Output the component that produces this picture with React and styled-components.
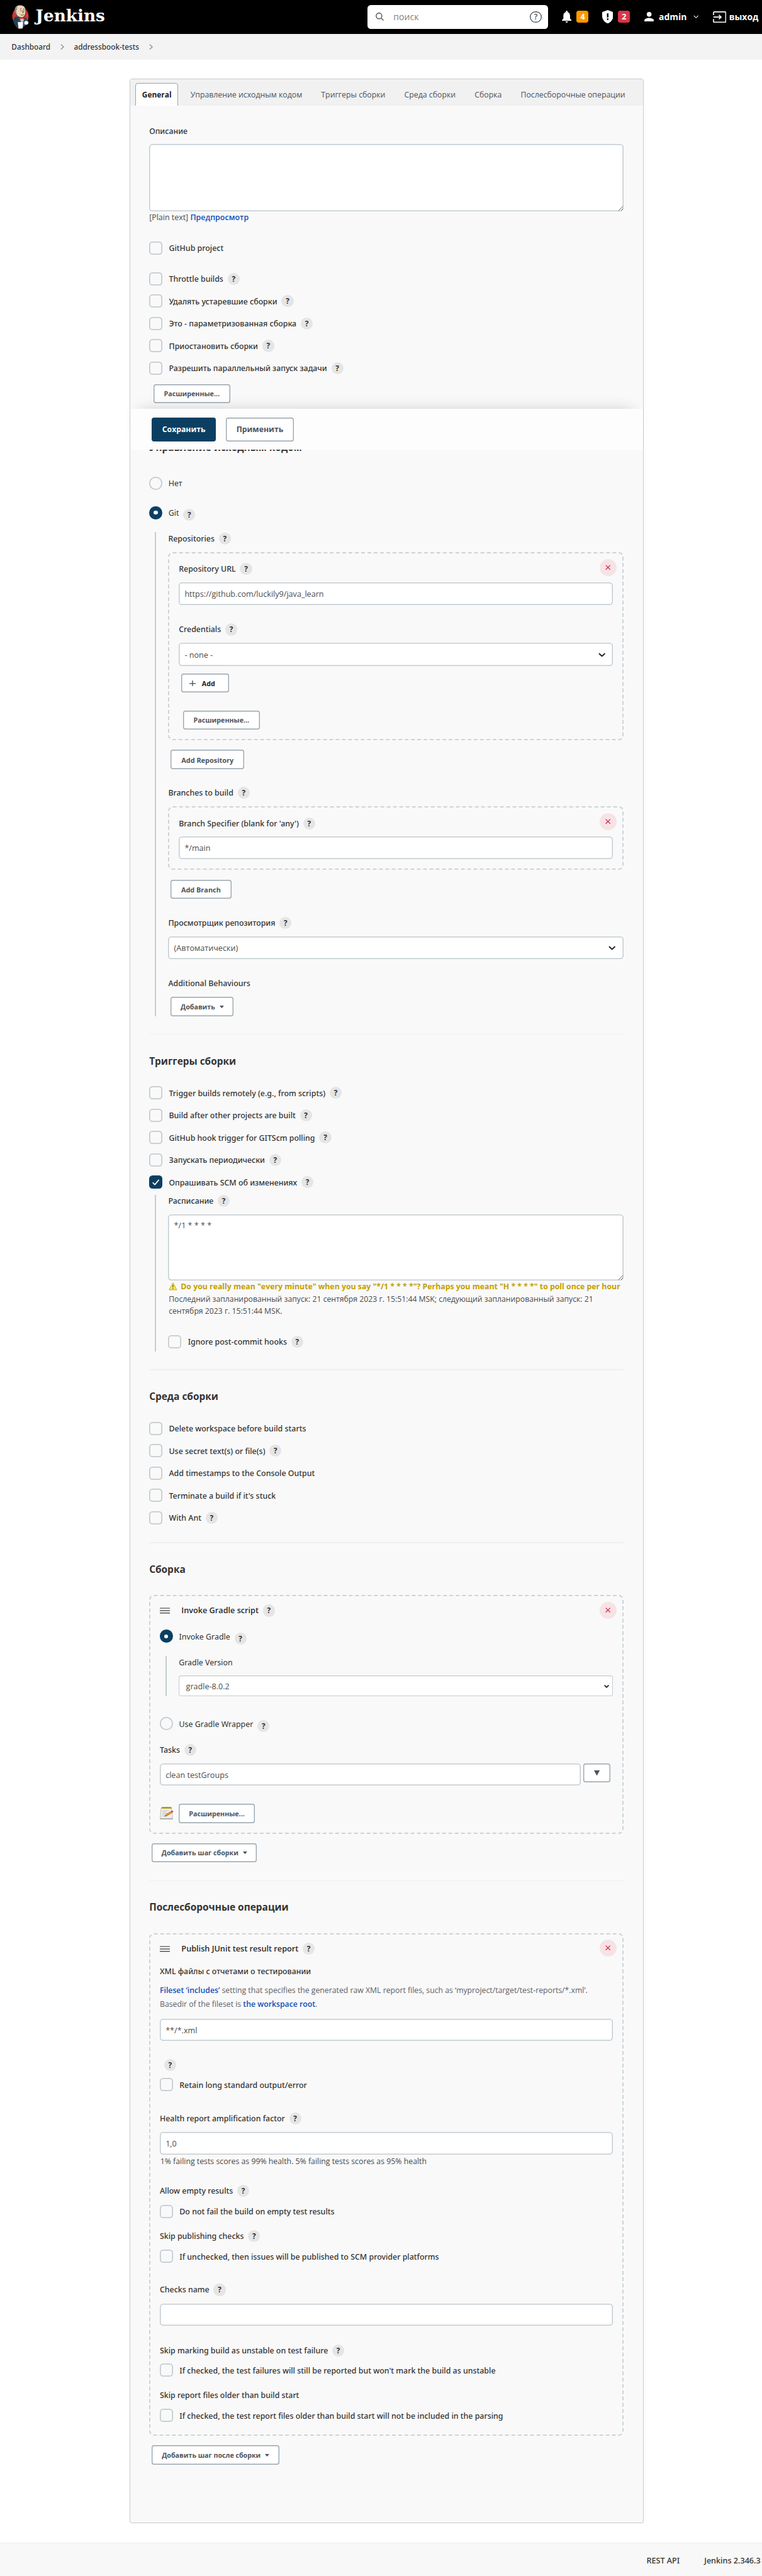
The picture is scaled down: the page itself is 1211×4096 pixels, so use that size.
import React from "react";
import styled, { createGlobalStyle, css } from "styled-components";

/* 1rem is ten design pixels at the page's scale */
const GlobalStyle = createGlobalStyle`
  html { font-size: 7.643px; }
  *, *::before, *::after { box-sizing: border-box; }
  body {
    margin: 0;
    background: #fff;
    color: #333;
    font-family: "Open Sans", "Noto Sans", sans-serif;
    font-size: 1.65rem;
    overflow-x: hidden;
  }
`;

const line = "#c3ccd1";
const buttonLine = "#98a5ae";
const navy = "#0b3f62";

/* ---------- header ---------- */

const Header = styled.header`
  display: flex;
  align-items: center;
  height: 7rem;
  background: #000;
  color: #fff;
  font-size: 1.83rem;
  font-weight: 700;
  white-space: nowrap;
`;

const Brand = styled.a`
  display: flex;
  align-items: center;
  flex: none;
  width: 76.4rem;
  padding-left: 2.3rem;
  gap: 1.4rem;
`;

const Wordmark = styled.span`
  font: 700 3.44rem/1 "DejaVu Serif", serif;
  padding-bottom: 0.5rem;
`;

const Search = styled.label`
  display: flex;
  align-items: center;
  flex: none;
  width: 37.5rem;
  height: 5rem;
  padding: 0 1.3rem 0 1.7rem;
  border-radius: 0.7rem;
  background: #fff;
`;

const SearchInput = styled.input`
  flex: 1;
  min-width: 0;
  border: 0;
  outline: 0;
  margin-left: 2rem;
  padding: 0;
  background: transparent;
  font: 400 1.85rem "Open Sans", sans-serif;
  &::placeholder { color: #828282; opacity: 1; }
`;

const HeaderItem = styled.a`
  display: flex;
  align-items: center;
  flex: none;
  gap: ${(p) => p.$gap || "1rem"};
  margin-left: ${(p) => p.$ml}rem;
  line-height: 2.5rem;
`;

const Count = styled.span`
  width: 2.5rem;
  height: 2.5rem;
  border-radius: 0.5rem;
  background: ${(p) => p.$color};
  font-size: 1.7rem;
  text-align: center;
`;

const Icon = styled.svg`
  display: block;
  flex: none;
  width: ${(p) => p.$w}rem;
  height: ${(p) => p.$h}rem;
  margin-left: ${(p) => p.$ml || 0}rem;
`;

/* ---------- breadcrumbs ---------- */

const Breadcrumbs = styled.nav`
  display: flex;
  align-items: center;
  height: 5.4rem;
  padding-left: 2.4rem;
  background: #f3f3f3;
  font: 500 1.54rem "Noto Sans", sans-serif;
`;

const Crumb = styled.a`
  display: flex;
  align-items: center;
  margin-right: 2rem;
`;

/* ---------- panel and tabs ---------- */

const Panel = styled.main`
  width: 106.9rem;
  margin: 4rem 0 0 26.9rem;
  border: 1px solid ${line};
  border-radius: 0.4rem;
  background: #f9f9f9;
`;

const Tabs = styled.nav`
  display: flex;
  align-items: flex-end;
  gap: 1.2rem;
  height: 5.4rem;
  padding-left: 1.15rem;
  background: #f1f1f1;
  white-space: nowrap;
`;

const Tab = styled.a`
  height: 4.6rem;
  padding: 0 1.24rem;
  border: 1px solid transparent;
  border-bottom: 0;
  border-radius: 0.6rem 0.6rem 0 0;
  color: #4d545d;
  font-size: 1.61rem;
  line-height: 4.7rem;
  ${(p) => p.$active && css`
    border-color: ${buttonLine};
    background: #fff;
    color: #222;
    font-size: 1.56rem;
    font-weight: 700;
  `}
`;

const Form = styled.form`
  display: flex;
  flex-direction: column;
  align-items: stretch;
  padding: 0 4rem 12.1rem;
`;

/* ---------- form parts ---------- */

const gapTop = css`margin-top: ${(p) => p.$mt || 0}rem;`;

const Title = styled.h2`
  ${gapTop}
  margin-bottom: 0;
  height: 3rem;
  padding-top: 0.1rem;
  font: 700 2.02rem/3rem "Open Sans", sans-serif;
  color: #333;
  white-space: nowrap;
`;

const LabelRow = styled.div`
  ${gapTop}
  display: flex;
  align-items: center;
  gap: 0.9rem;
  height: 2.5rem;
  padding-left: ${(p) => p.$indent || 0}rem;
  font: ${(p) => (p.$plain ? 400 : 500)} 1.62rem/2.5rem "Noto Sans", sans-serif;
  white-space: nowrap;
`;

const BlockName = styled.strong`
  font: 600 1.66rem/2.5rem "Open Sans", sans-serif;
  margin-left: 1.5rem;
  color: #2b2b2b;
`;

const HelpDot = styled.a`
  display: block;
  flex: none;
  width: 2.5rem;
  height: 2.5rem;
  border-radius: 50%;
  background: #e5e5e5;
  color: #333;
  font: 700 1.55rem/2.45rem "Open Sans", sans-serif;
  text-align: center;
  margin-top: ${(p) => p.$drop || 0}rem;
`;

const ChoiceRow = styled.label`
  ${gapTop}
  display: flex;
  align-items: center;
  gap: 0.9rem;
  height: 2.8rem;
  font: 500 1.625rem/2.6rem "Noto Sans", sans-serif;
  white-space: nowrap;
`;

const ChoiceText = styled.span`
  padding-top: 0.2rem;
  margin-left: ${(p) => (p.$radio ? 0.4 : 0.5)}rem;
  font-weight: ${(p) => (p.$light ? 400 : 500)};
`;

const Box = styled.span`
  display: flex;
  align-items: center;
  justify-content: center;
  flex: none;
  width: 2.7rem;
  height: 2.75rem;
  border-radius: ${(p) => (p.$round ? "50%" : "0.7rem")};
  box-shadow: inset 0 0 0 ${(p) => (p.$on ? 0 : 0.23)}rem ${line};
  background: ${(p) => (p.$on ? navy : "transparent")};
`;

const RadioDot = styled.span`
  width: 0.8rem;
  height: 0.8rem;
  border-radius: 50%;
  background: #fff;
`;

const field = css`
  ${gapTop}
  border: 0;
  outline: 0;
  border-radius: 0.7rem;
  box-shadow: inset 0 0 0 0.2rem ${line};
  background: #fff;
  color: #4d4d4d;
  font: 400 1.65rem "Open Sans", sans-serif;
`;

const TextInput = styled.input`
  ${field}
  width: 100%;
  min-width: 0;
  height: 4.65rem;
  padding: 0.2rem 1.2rem 0;
`;

const TextArea = styled.textarea`
  ${field}
  display: block;
  width: 100%;
  height: ${(p) => p.$h}rem;
  padding: 1.15rem 1.2rem;
  resize: vertical;
`;

const SelectBox = styled.div`
  ${field}
  display: flex;
  align-items: center;
  justify-content: space-between;
  height: ${(p) => (p.$thin ? 4.2 : 4.75)}rem;
  padding: 0.2rem ${(p) => (p.$thin ? 0.7 : 1.6)}rem 0 ${(p) => (p.$thin ? 1.35 : 1.2)}rem;
  ${(p) => p.$thin && css`
    border: 1px solid ${line};
    border-radius: 0.4rem;
    box-shadow: inset 0 1px 2px rgba(0, 0, 0, 0.07);
  `}
`;

const Button = styled.button`
  ${gapTop}
  display: flex;
  align-items: center;
  justify-content: center;
  align-self: flex-start;
  flex: none;
  gap: 0.9rem;
  width: ${(p) => p.$w}rem;
  height: 4rem;
  margin-left: ${(p) => p.$ml ?? 0.5}rem;
  margin-right: ${(p) => p.$mr || 0}rem;
  padding: 0.1rem 0 0;
  border: 0;
  border-radius: 0.5rem;
  box-shadow: inset 0 0 0 0.18rem ${buttonLine};
  background: #fff;
  color: #4d545d;
  font: 700 ${(p) => p.$size || 1.4}rem "Open Sans", sans-serif;
  white-space: nowrap;
`;

const AddCredential = styled(Button)`
  justify-content: flex-start;
  padding-left: 1.7rem;
  gap: 1.3rem;
  color: #222;
`;

const Nested = styled.div`
  ${gapTop}
  display: flex;
  flex-direction: column;
  margin-left: ${(p) => p.$ml || 1.2}rem;
  padding: 0 0 ${(p) => p.$pb || 0}rem 2.5rem;
  border-left: 2px solid ${line};
`;

const Chunk = styled.section`
  ${gapTop}
  position: relative;
  display: flex;
  flex-direction: column;
  padding: ${(p) => p.$pt}rem 1.94rem ${(p) => p.$pb}rem;
  border: 2px dashed #ccd4d8;
  border-radius: 1rem;
`;

const DeleteButton = styled.button`
  position: absolute;
  top: ${(p) => p.$top}rem;
  right: 1.2rem;
  display: flex;
  align-items: center;
  justify-content: center;
  width: 3.5rem;
  height: 3.5rem;
  padding: 0;
  border: 0;
  border-radius: 50%;
  background: #f6e3e6;
`;

const Divider = styled.hr`
  ${gapTop}
  width: 100%;
  height: 0.2rem;
  margin-bottom: 0;
  border: 0;
  background: #f0f0f0;
`;

const Line = styled.p`
  ${gapTop}
  margin-bottom: 0;
  padding-left: ${(p) => p.$indent || 0}rem;
  color: ${(p) => p.$color || "#4a4a4a"};
  font-size: ${(p) => p.$size || 1.6}rem;
  line-height: ${(p) => p.$lh || 2.6}rem;
  white-space: nowrap;
`;

const Link = styled.a`
  color: #134fb8;
  font-weight: 600;
`;

const Warning = styled.p`
  display: flex;
  align-items: center;
  gap: 0.7rem;
  height: 2.5rem;
  margin: 0;
  padding-left: 0.1rem;
  color: #c4a000;
  font-size: 1.61rem;
  font-weight: 700;
  white-space: nowrap;
`;

const InlineRow = styled.div`
  ${gapTop}
  display: flex;
  align-items: ${(p) => p.$align || "flex-start"};
`;

const SaveBar = styled.div`
  position: relative;
  z-index: 1;
  display: flex;
  align-items: flex-start;
  height: 8.5rem;
  margin: 1.2rem -4rem 0;
  padding: 1.8rem 4.5rem 0;
  background: #fdfdfd;
  box-shadow: 0 -1.6rem 3.2rem -2rem rgba(0, 0, 0, 0.2);
`;

const SaveButton = styled.button`
  height: 4.95rem;
  width: ${(p) => p.$w}rem;
  margin: 0 2rem 0 0;
  padding: 0 0 0.1rem;
  border: 0;
  border-radius: 0.5rem;
  color: ${(p) => (p.$primary ? "#fff" : "#4d545d")};
  background: ${(p) => (p.$primary ? navy : "#fff")};
  box-shadow: ${(p) => (p.$primary ? "none" : `inset 0 0 0 0.18rem ${buttonLine}`)};
  font: 700 1.605rem "Open Sans", sans-serif;
`;

const Footer = styled.footer`
  display: flex;
  justify-content: flex-end;
  gap: 5.1rem;
  height: 7.1rem;
  margin-top: 4rem;
  padding: 2.4rem 0.3rem 0 0;
  border-top: 1px solid #ededed;
  background: #f8f8f8;
  font: 500 1.65rem/2.5rem "Noto Sans", sans-serif;
`;

/* ---------- drawings ---------- */

const Chevron = ({ w = 1.5, h = 0.85, color = "#222", sw = 2.6, ml }) => (
  <Icon $w={w} $h={h} $ml={ml} viewBox="0 0 15 8.5" fill="none" stroke={color} strokeWidth={sw}>
    <path d="M1.2 1.2 7.5 7.2 13.8 1.2" />
  </Icon>
);

const CrumbArrow = () => (
  <Icon $w={0.8} $h={1.2} $ml={2.1} viewBox="0 0 8 12" fill="none" stroke="#8a8a8a" strokeWidth="1.7">
    <path d="M1 .8 6.6 6 1 11.2" />
  </Icon>
);

const Caret = ({ big }) => (
  <Icon $w={big ? 1.2 : 0.9} $h={big ? 1.1 : 0.55} viewBox="0 0 10 10" preserveAspectRatio="none" fill="#4d545d">
    <path d="M0 0h10L5 10z" />
  </Icon>
);

const Tick = () => (
  <Icon $w={1.5} $h={1.3} viewBox="0 0 15 13" fill="none" stroke="#fff" strokeWidth="2.2" strokeLinecap="round" strokeLinejoin="round">
    <path d="M1.5 7.5 5.3 11.3 13.3 1.8" />
  </Icon>
);

const Cross = () => (
  <Icon $w={1.1} $h={1.1} viewBox="0 0 11 11" fill="none" stroke="#e0203c" strokeWidth="1.6">
    <path d="M.8.8l9.4 9.4M10.2.8.8 10.2" />
  </Icon>
);

const Plus = () => (
  <Icon $w={1.3} $h={1.3} viewBox="0 0 13 13" fill="none" stroke="#444" strokeWidth="1.6">
    <path d="M6.5 0v13M0 6.5h13" />
  </Icon>
);

const Grip = () => (
  <Icon $w={2.1} $h={1.3} viewBox="0 0 21 13" fill="none" stroke="#555" strokeWidth="1.9">
    <path d="M0 1.5h21M0 6.5h21M0 11.5h21" />
  </Icon>
);

const WarningSign = () => (
  <Icon $w={1.8} $h={1.7} viewBox="0 0 18 17">
    <path d="M9 1 17 15.6H1z" fill="#fce94f" stroke="#c4a000" strokeWidth="1.2" strokeLinejoin="round" />
    <path d="M8.1 5.5h1.8l-.4 5h-1zM8.2 11.7h1.6v1.7H8.2z" fill="#333" />
  </Icon>
);

const Notepad = () => (
  <Icon $w={2.9} $h={2.9} viewBox="0 0 29 29">
    <path d="M2.5 4h22l2 22H.8z" fill="#efefec" stroke="#a5a5a0" strokeWidth=".9" />
    <path d="M.9 25h26l.3 2.500H.6z" fill="#b0b0aa" />
    <path d="M3.500 1.500h21v3.500H3.500z" fill="#d2b52c" />
    <path d="M4.500 1.500l2 3 2-3 2 3 2-3 2 3 2-3 2 3 2-3 2 3 1-2" fill="none" stroke="#6f5a05" strokeWidth=".8" />
    <path d="M5.500 9h13M5 12h9M5 15h12M4.500 18h6M4.500 21h6" stroke="#b9b9b4" strokeWidth="1" />
    <path d="M10.500 20.800l1.500-3L24.600 9.800l2 2.900L14 20.500z" fill="#eb9d3a" stroke="#7d4d0c" strokeWidth=".8" />
    <path d="M23.400 10.500l2.200-1.400c1.500-.4 2.900 1.500 2.200 2.700l-2.300 1.600z" fill="#dc4a3a" />
    <path d="M10.500 20.800l.8-1.600 1.100 1.400z" fill="#222" />
  </Icon>
);

const Butler = () => (
  <Icon $w={3.7} $h={5.2} viewBox="0 0 37 52">
    <ellipse cx="19" cy="25" rx="17" ry="19" fill="#d33833" />
    <path d="M5 38c-1-6 0-11 5-12l7-2 10 2c5 1 6 5 6 9l-3 8-8 7H13z" fill="#335061" />
    <path d="M5 38l5 9 6 3V32l-6-7c-5 2-6 8-5 13z" fill="#27414f" />
    <path d="M8 13C7 5 13 1 19 1.500c7 .3 11 5 11 12 0 8-3 14-9 14-7 0-12-6-13-14.500z" fill="#f0d6b7" stroke="#231f20" strokeWidth="1" />
    <path d="M8 18C5 9 9 3 15 2c-4 3-4 6-3 9l-2 1 1 8c-1.500 0-2.500-1-3-2z" fill="#8b8b88" />
    <path d="M18 10l3-1M24.500 9.500l3 .5M19 13.500h2.500M25.500 13.500H28M23.500 12l1.500 5-2.500.5M19 21c2 2 5 2 7.500 0" fill="none" stroke="#3c2f28" strokeWidth="1.100" />
    <path d="M17 26l5 2.500 5-2.500v6l-5-2-5 2z" fill="#e23b36" stroke="#7d1512" strokeWidth=".6" />
    <path d="M18 31l4-1.500 4.500 2L24 37l-3 1z" fill="#b8cbd6" />
    <path d="M13.500 36.500l11 .5-1 13-8.500.5z" fill="#fff" />
    <path d="M27 36l4-2 4.500 2-.5 5-5 1.500-3-2z" fill="#fff" stroke="#8a8a8a" strokeWidth=".6" />
  </Icon>
);

const SearchIcon = () => (
  <Icon $w={1.7} $h={1.7} viewBox="0 0 17 17" fill="none" stroke="#444" strokeWidth="1.7">
    <circle cx="7" cy="7" r="6" />
    <path d="M11.300 11.300 16.300 16.300" />
  </Icon>
);

const HelpRing = styled.span`
  display: block;
  width: 2.4rem;
  height: 2.4rem;
  border-radius: 50%;
  box-shadow: inset 0 0 0 0.18rem #4d545d;
  color: #4d545d;
  font: 600 1.6rem/2.35rem "Open Sans", sans-serif;
  text-align: center;
`;

const Bell = () => (
  <Icon $w={2} $h={2.5} viewBox="0 0 20 25" fill="#fff">
    <path d="M10 0c1.200 0 1.900.9 1.900 2v.8c3.300.9 5 3.800 5 7.700v6l3 3.300v1.200H.1v-1.200l3-3.300v-6c0-3.900 1.700-6.800 5-7.700V2C8.100.9 8.800 0 10 0zM7.500 22.300h5c0 1.500-1.100 2.500-2.500 2.500s-2.500-1-2.500-2.500z" />
  </Icon>
);

const Shield = () => (
  <Icon $w={2.3} $h={2.8} viewBox="0 0 23 28">
    <path d="M11.500 0 23 4.200v8.300C23 19.500 18 25.700 11.500 28 5 25.700 0 19.500 0 12.500V4.200z" fill="#fff" />
    <path d="M9.900 7h3.200v8.500H9.900zM9.900 17.500h3.200v3.200H9.900z" fill="#000" />
  </Icon>
);

const Person = () => (
  <Icon $w={2} $h={2} viewBox="0 0 20 20" fill="#fff">
    <circle cx="10" cy="5" r="5" />
    <path d="M0 20v-2.500c0-3.300 6.700-5.100 10-5.100s10 1.800 10 5.100V20z" />
  </Icon>
);

const Exit = () => (
  <Icon $w={2.8} $h={2.4} viewBox="0 0 28 24" fill="none" stroke="#fff" strokeWidth="2.200">
    <path d="M1.200 8V3.200a2 2 0 0 1 2-2h21.600a2 2 0 0 1 2 2v17.600a2 2 0 0 1-2 2H3.200a2 2 0 0 1-2-2V16" />
    <path d="M1 12h15M12.500 7.800 17 12l-4.500 4.200" />
  </Icon>
);

/* ---------- composed parts ---------- */

const Label = ({ children, help, ...rest }) => (
  <LabelRow {...rest}>
    {children && <span>{children}</span>}
    {help && <HelpDot>?</HelpDot>}
  </LabelRow>
);

const Check = ({ children, help, on, mt }) => (
  <ChoiceRow $mt={mt}>
    <Box $on={on}>{on && <Tick />}</Box>
    <ChoiceText>{children}</ChoiceText>
    {help && <HelpDot>?</HelpDot>}
  </ChoiceRow>
);

const Radio = ({ children, help, on, mt, drop = 0.9 }) => (
  <ChoiceRow $mt={mt}>
    <Box $round $on={on}>{on && <RadioDot />}</Box>
    <ChoiceText $radio $light>{children}</ChoiceText>
    {help && <HelpDot $drop={drop}>?</HelpDot>}
  </ChoiceRow>
);

const Remove = ({ top }) => (
  <DeleteButton type="button" $top={top}><Cross /></DeleteButton>
);

const Checks = ({ items, mt, step = 1.85 }) =>
  items.map(([text, help, on], i) => (
    <Check key={text} mt={i ? step : mt} help={help} on={on}>{text}</Check>
  ));

const tabs = ["General", "Управление исходным кодом", "Триггеры сборки", "Среда сборки", "Сборка", "Послесборочные операции"];

export default function App() {
  return (
    <>
      <GlobalStyle />
      <Header>
        <Brand><Butler /><Wordmark>Jenkins</Wordmark></Brand>
        <Search>
          <SearchIcon />
          <SearchInput placeholder="поиск" />
          <HelpRing>?</HelpRing>
        </Search>
        <HeaderItem $ml={3}><Bell /><Count $color="#ff9800">4</Count></HeaderItem>
        <HeaderItem $ml={2.8}><Shield /><Count $color="#dc3545">2</Count></HeaderItem>
        <HeaderItem $ml={3}><Person />admin<Chevron w={1.1} h={0.7} color="#fff" sw={1.8} ml={0.4} /></HeaderItem>
        <HeaderItem $ml={2.9} $gap="0.6rem"><Exit />выход</HeaderItem>
      </Header>
      <Breadcrumbs>
        <Crumb>Dashboard<CrumbArrow /></Crumb>
        <Crumb>addressbook-tests<CrumbArrow /></Crumb>
      </Breadcrumbs>

      <Panel>
        <Tabs>{tabs.map((t, i) => <Tab key={t} $active={i === 0}>{t}</Tab>)}</Tabs>
        <Form>
          <Label $mt={4.1}>Описание</Label>
          <TextArea $mt={1.5} $h={13.9} />
          <Line $mt={0.1} $size={1.63}>[Plain text] <Link>Предпросмотр</Link></Line>
          <Check mt={3.6}>GitHub project</Check>
          <Checks
            mt={3.6}
            items={[
              ["Throttle builds", true],
              ["Удалять устаревшие сборки", true],
              ["Это - параметризованная сборка", true],
              ["Приостановить сборки", true],
              ["Разрешить параллельный запуск задачи", true],
            ]}
          />
          <Button type="button" $mt={1.9} $ml={0.9} $w={15.9}>Расширенные...</Button>

          <SaveBar>
            <SaveButton type="button" $primary $w={13.4}>Сохранить</SaveButton>
            <SaveButton type="button" $w={14.2}>Применить</SaveButton>
          </SaveBar>

          <Title $mt={-1.95}>Управление исходным кодом</Title>
          <Radio mt={4.5}>Нет</Radio>
          <Radio mt={3.3} on help>Git</Radio>
          <Nested $mt={2.65}>
            <Label $mt={0.1} help>Repositories</Label>
            <Chunk $mt={1.6} $pt={1.97} $pb={1.9}>
              <Remove top={1.15} />
              <Label help>Repository URL</Label>
              <TextInput $mt={1.6} defaultValue="https://github.com/luckily9/java_learn" />
              <Label $mt={3.85} help>Credentials</Label>
              <SelectBox $mt={1.55}>- none -<Chevron /></SelectBox>
              <AddCredential type="button" $mt={1.6} $w={9.9}><Plus />Add</AddCredential>
              <Button type="button" $mt={3.7} $ml={0.9} $w={15.9}>Расширенные...</Button>
            </Chunk>
            <Button type="button" $mt={2.04} $w={15.3} $size={1.43}>Add Repository</Button>
            <Label $mt={3.7} help>Branches to build</Label>
            <Chunk $mt={1.6} $pt={2.02} $pb={2}>
              <Remove top={1.15} />
              <Label help>Branch Specifier (blank for 'any')</Label>
              <TextInput $mt={1.5} defaultValue="*/main" />
            </Chunk>
            <Button type="button" $mt={2} $w={12.6} $size={1.43}>Add Branch</Button>
            <Label $mt={3.8} help>Просмотрщик репозитория</Label>
            <SelectBox $mt={1.5}>(Автоматически)<Chevron /></SelectBox>
            <Label $mt={3.85}>Additional Behaviours</Label>
            <Button type="button" $mt={1.5} $w={13.1}>Добавить<Caret /></Button>
          </Nested>

          <Divider $mt={3.7} />
          <Title $mt={4}>Триггеры сборки</Title>
          <Checks
            mt={3.7}
            items={[
              ["Trigger builds remotely (e.g., from scripts)", true],
              ["Build after other projects are built", true],
              ["GitHub hook trigger for GITScm polling", true],
              ["Запускать периодически", true],
              ["Опрашивать SCM об изменениях", true, true],
            ]}
          />
          <Nested $mt={1.2} $pb={0.6}>
            <Label $mt={0.05} help>Расписание</Label>
            <TextArea $mt={1.6} $h={13.75} defaultValue="*/1 * * * *" />
            <Warning>
              <WarningSign />
              Do you really mean "every minute" when you say "*/1 * * * *"? Perhaps you meant "H * * * *" to poll once per hour
            </Warning>
            <Line $indent={0.1}>
              Последний запланированный запуск: 21 сентября 2023 г. 15:51:44 MSK; следующий запланированный запуск: 21
              <br />
              сентября 2023 г. 15:51:44 MSK.
            </Line>
            <Check mt={3.6} help>Ignore post-commit hooks</Check>
          </Nested>

          <Divider $mt={3.7} />
          <Title $mt={4}>Среда сборки</Title>
          <Checks
            mt={3.75}
            items={[
              ["Delete workspace before build starts"],
              ["Use secret text(s) or file(s)", true],
              ["Add timestamps to the Console Output"],
              ["Terminate a build if it's stuck"],
              ["With Ant", true],
            ]}
          />

          <Divider $mt={3.7} />
          <Title $mt={4}>Сборка</Title>
          <Chunk $mt={3.8} $pt={1.7} $pb={1.95}>
            <Remove top={1.1} />
            <LabelRow><Grip /><BlockName>Invoke Gradle script</BlockName><HelpDot>?</HelpDot></LabelRow>
            <Radio mt={2.7} on help>Invoke Gradle</Radio>
            <Nested $mt={2.7}>
              <Label $mt={0.1} $plain>Gradle Version</Label>
              <SelectBox $thin $mt={1.5}>gradle-8.0.2<Chevron w={1.05} h={0.6} sw={3.4} /></SelectBox>
            </Nested>
            <Radio mt={4.4} help>Use Gradle Wrapper</Radio>
            <Label $mt={2.75} help>Tasks</Label>
            <InlineRow $mt={1.6}>
              <TextInput defaultValue="clean testGroups" />
              <Button type="button" $w={5.7} $mr={0.5}><Caret big /></Button>
            </InlineRow>
            <InlineRow $mt={3.75} $align="center">
              <Notepad />
              <Button type="button" $ml={1} $w={15.9}>Расширенные...</Button>
            </InlineRow>
          </Chunk>
          <Button type="button" $mt={2} $w={21.9}>Добавить шаг сборки<Caret /></Button>

          <Divider $mt={3.7} />
          <Title $mt={4}>Послесборочные операции</Title>
          <Chunk $mt={3.8} $pt={1.75} $pb={2.55}>
            <Remove top={1.1} />
            <LabelRow><Grip /><BlockName>Publish JUnit test result report</BlockName><HelpDot>?</HelpDot></LabelRow>
            <Label $mt={2.25}>XML файлы с отчетами о тестировании</Label>
            <Line $mt={1.3} $lh={2.875} $size={1.603} $color="#5c6168">
              <Link>Fileset ‘includes’</Link> setting that specifies the generated raw XML report files, such as ‘myproject/target/test-reports/*.xml’.
              <br />
              Basedir of the fileset is <Link>the workspace root</Link>.
            </Line>
            <TextInput $mt={1.5} defaultValue="**/*.xml" />
            <Label $mt={3.75} $indent={0.9} help />
            <Check mt={1.45}>Retain long standard output/error</Check>
            <Label $mt={4.35} help>Health report amplification factor</Label>
            <TextInput $mt={1.6} defaultValue="1,0" />
            <Line $mt={0.15} $indent={0.1} $size={1.61}>1% failing tests scores as 99% health. 5% failing tests scores as 95% health</Line>
            <Label $mt={3.6} help>Allow empty results</Label>
            <Check mt={1.6}>Do not fail the build on empty test results</Check>
            <Label $mt={2.5} help>Skip publishing checks</Label>
            <Check mt={1.6}>If unchecked, then issues will be published to SCM provider platforms</Check>
            <Label $mt={4.3} help>Checks name</Label>
            <TextInput $mt={1.6} />
            <Label $mt={3.85} help>Skip marking build as unstable on test failure</Label>
            <Check mt={1.5}>If checked, the test failures will still be reported but won't mark the build as unstable</Check>
            <Label $mt={2.55}>Skip report files older than build start</Label>
            <Check mt={1.55}>If checked, the test report files older than build start will not be included in the parsing</Check>
          </Chunk>
          <Button type="button" $mt={2} $w={26.6}>Добавить шаг после сборки<Caret /></Button>
        </Form>
      </Panel>
      <Footer><a>REST API</a><a>Jenkins 2.346.3</a></Footer>
    </>
  );
}
